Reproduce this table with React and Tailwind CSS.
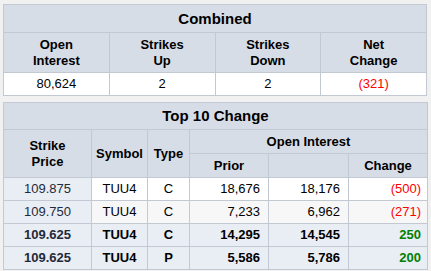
import React from "react";

const combined = { oi: "80,624", up: "2", down: "2", net: "(321)" };

const rows = [
  { strike: "109.875", sym: "TUU4", type: "C", prior: "18,676", cur: "18,176", chg: "(500)", neg: true, bold: false, bg: "bg-white" },
  { strike: "109.750", sym: "TUU4", type: "C", prior: "7,233", cur: "6,962", chg: "(271)", neg: true, bold: false, bg: "bg-[#f7f7f8]" },
  { strike: "109.625", sym: "TUU4", type: "C", prior: "14,295", cur: "14,545", chg: "250", neg: false, bold: true, bg: "bg-[#e9edf4]" },
  { strike: "109.625", sym: "TUU4", type: "P", prior: "5,586", cur: "5,786", chg: "200", neg: false, bold: true, bg: "bg-[#e9edf4]" },
];

const th = "border border-[#c3c9d3] bg-[#d7dde6] font-bold text-[13px] leading-[16px] text-black";
const td = "border border-[#c3c9d3] text-[13px] leading-[16px] h-[23px]";

export default function App() {
  return (
    <div className="w-[431px] h-[271px] overflow-hidden bg-[#f1f1f1] pt-[4px] font-['Liberation_Sans',Arial,sans-serif]">
      <table className="mx-[3px] w-[424px] border-collapse table-fixed border border-[#bcc3cd]">
        <thead>
          <tr>
            <th colSpan={4} className={`${th} h-[28px] text-[15px]`}>Combined</th>
          </tr>
          <tr>
            <th className={`${th} h-[40px]`}>Open<br />Interest</th>
            <th className={th}>Strikes<br />Up</th>
            <th className={th}>Strikes<br />Down</th>
            <th className={th}>Net<br />Change</th>
          </tr>
        </thead>
        <tbody>
          <tr className="bg-white">
            <td className={`${td} text-center`}>{combined.oi}</td>
            <td className={`${td} text-center`}>{combined.up}</td>
            <td className={`${td} text-center`}>{combined.down}</td>
            <td className={`${td} text-center text-[#ff0000]`}>{combined.net}</td>
          </tr>
        </tbody>
      </table>

      <table className="mx-[3px] mt-[6px] w-[425px] border-collapse table-fixed border border-[#bcc3cd]">
        <colgroup>
          <col className="w-[88px]" />
          <col className="w-[56px]" />
          <col className="w-[42px]" />
          <col className="w-[79px]" />
          <col className="w-[80px]" />
          <col />
        </colgroup>
        <thead>
          <tr>
            <th colSpan={6} className={`${th} h-[27px] text-[15px]`}>Top 10 Change</th>
          </tr>
          <tr>
            <th rowSpan={2} className={th}>Strike<br />Price</th>
            <th rowSpan={2} className={th}>Symbol</th>
            <th rowSpan={2} className={th}>Type</th>
            <th colSpan={3} className={`${th} h-[24px]`}>Open Interest</th>
          </tr>
          <tr>
            <th className={`${th} h-[24px]`}>Prior</th>
            <th className={th}></th>
            <th className={th}>Change</th>
          </tr>
        </thead>
        <tbody>
          {rows.map((r, i) => (
            <tr key={i} className={`${r.bg} ${r.bold ? "font-bold" : ""}`}>
              <td className={`${td} text-center text-[#1f2a3a] ${r.bold ? "" : "bg-[#e9edf4]"}`}>{r.strike}</td>
              <td className={`${td} text-center`}>{r.sym}</td>
              <td className={`${td} text-center`}>{r.type}</td>
              <td className={`${td} text-right pr-[8px]`}>{r.prior}</td>
              <td className={`${td} text-right pr-[8px]`}>{r.cur}</td>
              <td className={`${td} text-right pr-[6px] ${r.neg ? "text-[#ff0000]" : "text-[#008000]"}`}>{r.chg}</td>
            </tr>
          ))}
        </tbody>
      </table>
    </div>
  );
}
